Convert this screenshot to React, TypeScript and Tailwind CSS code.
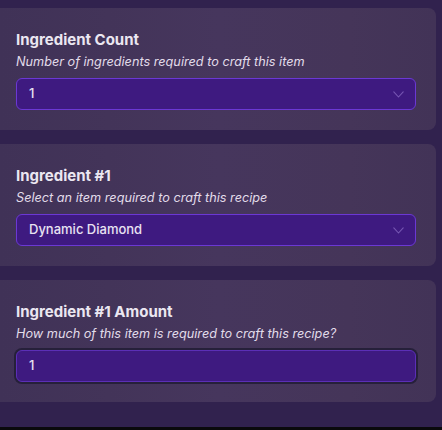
import React from "react";

function Chevron() {
  return (
    <svg width="11" height="7" viewBox="0 0 11 7" fill="none" className="shrink-0">
      <path d="M0.8 0.8 L5.5 6 L10.2 0.8" stroke="#7656b2" strokeWidth="1.1" strokeLinecap="round" strokeLinejoin="round" />
    </svg>
  );
}

function Card({ title, subtitle, children }: { title: string; subtitle: string; children: React.ReactNode }) {
  return (
    <div className="mr-[6px] rounded-r-[8px] bg-[linear-gradient(90deg,#403257_0%,#433459_25%,#46365d_50%,#453559_80%,#423357_100%)] pl-4 pr-5 pt-5 pb-5">
      <div className="text-[15px] leading-[24px] font-bold text-[#ebe7f1]">{title}</div>
      <div className="text-[12.7px] leading-[20px] italic text-[#e2dcea]">{subtitle}</div>
      <div className="mt-[6px]">{children}</div>
    </div>
  );
}

function Select({ value }: { value: string }) {
  return (
    <div className="flex h-[32px] items-center justify-between rounded-[6px] border border-[#6b38d4] bg-[#3e1a80] pl-3 pr-[11px]">
      <span className="text-[13px] font-medium text-[#e8e2f2]">{value}</span>
      <Chevron />
    </div>
  );
}

export default function App() {
  return (
    <div
      className="relative h-[430px] w-[442px] overflow-hidden bg-[#31224e]"
      style={{ fontFamily: "Inter, 'Noto Sans', sans-serif" }}
    >
      <div className="flex flex-col gap-[14px] pt-[8px]">
        <Card title="Ingredient Count" subtitle="Number of ingredients required to craft this item">
          <Select value="1" />
        </Card>
        <Card title="Ingredient #1" subtitle="Select an item required to craft this recipe">
          <Select value="Dynamic Diamond" />
        </Card>
        <Card title="Ingredient #1 Amount" subtitle="How much of this item is required to craft this recipe?">
          <div className="flex h-[32px] items-center rounded-[6px] border border-[#5b2fb6] bg-[#3e1a80] pl-3 shadow-[0_0_0_2px_#26203a]">
            <span className="text-[13px] font-medium text-[#e8e2f2]">1</span>
          </div>
        </Card>
      </div>
      <div className="absolute bottom-0 left-0 h-[3px] w-full bg-[#0a0a0c]" />
    </div>
  );
}
